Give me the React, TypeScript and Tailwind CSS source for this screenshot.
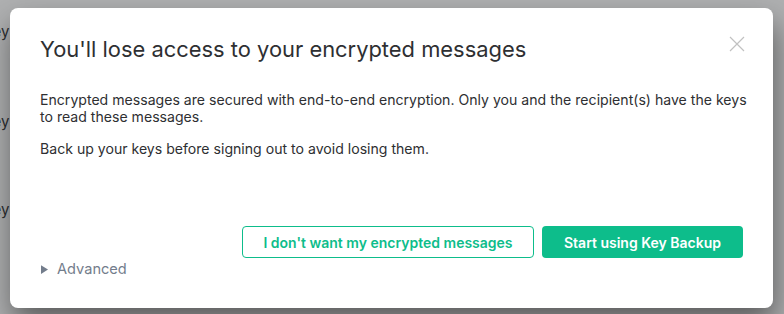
import React from 'react';

export default function App() {
  return (
    <div className="relative w-[784px] h-[314px] overflow-hidden bg-white font-['Inter',sans-serif]">
      {/* Page behind the dialog */}
      <div className="flex flex-col pt-[21px] -ml-[17px] text-[15px] text-[#2e2f32]">
        <span className="h-[90px]">Key</span>
        <span className="h-[88px]">Key</span>
        <span>Key</span>
      </div>

      {/* Overlay */}
      <div className="absolute inset-0 bg-[rgba(46,48,51,0.38)] pt-[8px] pl-[10px]">
        <div className="relative w-[763px] h-[300px] bg-white rounded-[8px] shadow-[2px_15px_30px_0_rgba(0,0,0,0.48)] px-[30px] pt-[27px] flex flex-col">
          <h2 className="text-[21.9px] leading-[29px] text-[#2e2f32] font-normal">
            You'll lose access to your encrypted messages
          </h2>
          <button className="absolute right-[28px] top-[28px] w-[16px] h-[16px] text-[#c1c1c1]">
            <svg viewBox="0 0 16 16" className="w-[16px] h-[16px]" fill="none" stroke="currentColor" strokeWidth={1.2}>
              <path d="M1 1l14 14M15 1L1 15" />
            </svg>
          </button>

          <div className="mt-[27px] -mr-[12px] text-[14.1px] leading-[17px] text-[#2e2f32]">
            <p>
              Encrypted messages are secured with end-to-end encryption. Only you and the recipient(s) have the keys
              to read these messages.
            </p>
            <p className="mt-[15px]">Back up your keys before signing out to avoid losing them.</p>
          </div>

          <div className="flex justify-end gap-[8px] mt-[69px]">
            <button className="w-[292px] h-[32px] rounded-[4px] border border-[#0dbd8b] text-[#0dbd8b] text-[14px] font-semibold">
              I don't want my encrypted messages
            </button>
            <button className="w-[201px] h-[32px] rounded-[4px] bg-[#0dbd8b] text-white text-[14px] font-semibold">
              Start using Key Backup
            </button>
          </div>

          <div className="flex items-center gap-[8px] mt-[1px] text-[14.6px] text-[#737d8c]">
            <svg viewBox="0 0 8 10" className="w-[7px] h-[9px] ml-[1px]" fill="#737d8c">
              <path d="M0 0l8 5-8 5z" />
            </svg>
            <span className="ml-[1px]">Advanced</span>
          </div>
        </div>
      </div>
    </div>
  );
}
